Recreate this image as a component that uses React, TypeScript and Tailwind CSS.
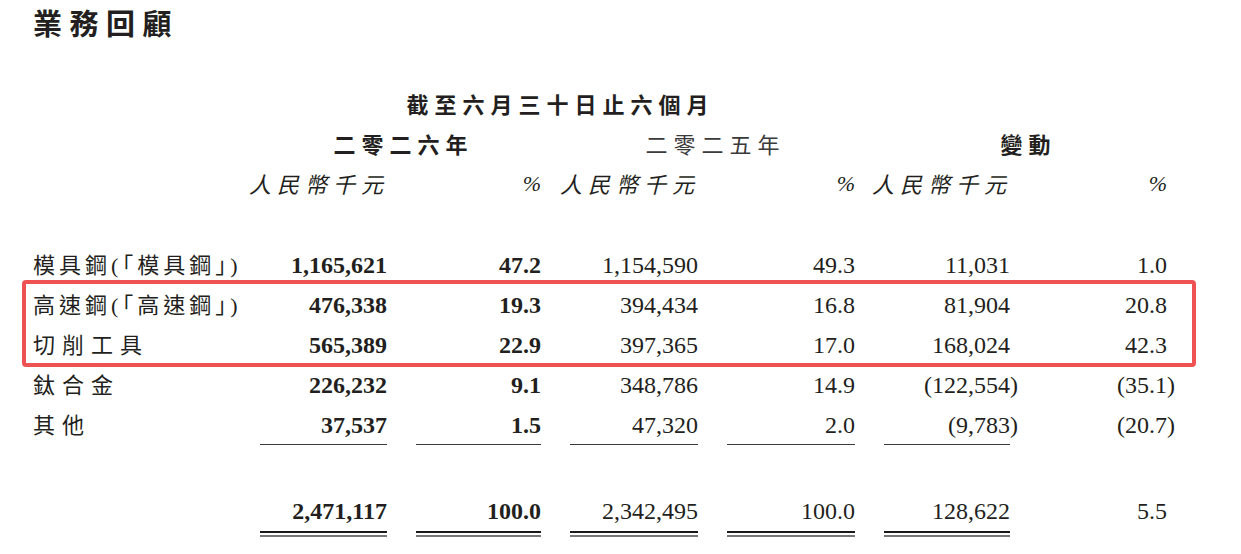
import React from "react";

type Row = {
  label: string;
  long?: boolean;
  values: string[];
};

const ROWS: Row[] = [
  { label: "模具鋼(「模具鋼」)", long: true, values: ["1,165,621", "47.2", "1,154,590", "49.3", "11,031", "1.0"] },
  { label: "高速鋼(「高速鋼」)", long: true, values: ["476,338", "19.3", "394,434", "16.8", "81,904", "20.8"] },
  { label: "切削工具", values: ["565,389", "22.9", "397,365", "17.0", "168,024", "42.3"] },
  { label: "鈦合金", values: ["226,232", "9.1", "348,786", "14.9", "(122,554)", "(35.1)"] },
  { label: "其他", values: ["37,537", "1.5", "47,320", "2.0", "(9,783)", "(20.7)"] },
];

const TOTAL = ["2,471,117", "100.0", "2,342,495", "100.0", "128,622", "5.5"];

const GRID = "grid grid-cols-[198px_156px_154px_157px_157px_155px_157px]";
const SERIF = "font-['Liberation_Serif','Noto_Sans_CJK_TC',serif]";
const CJK = "font-['Noto_Sans_CJK_TC','Noto_Sans_CJK_SC',sans-serif]";

// closing paren hangs past the digit column, like the printed report
function Num({ v }: { v: string }) {
  if (v.endsWith(")")) {
    return (
      <span>
        {v.slice(0, -1)}
        <span className="-mr-[8px]">)</span>
      </span>
    );
  }
  return <span>{v}</span>;
}

function DataRow({ row, underline }: { row: Row; underline?: boolean }) {
  return (
    <div className={`${GRID} h-[40px]`}>
      <div
        className={`flex items-center whitespace-nowrap text-[22px] ${SERIF} ${
          row.long ? "tracking-[4px]" : "tracking-[7px]"
        }`}
      >
        {row.label}
      </div>
      {row.values.map((v, i) => (
        <div key={i} className="pl-[29px]">
          <div
            className={`flex h-[40px] items-center justify-end text-[24px] ${SERIF} ${
              i < 2 ? "font-bold" : ""
            } ${underline && i < 5 ? "h-[39px] border-b border-[#3a3a3a]" : ""}`}
          >
            <Num v={v} />
          </div>
        </div>
      ))}
    </div>
  );
}

export default function App() {
  return (
    <div className="h-[554px] w-[1241px] overflow-hidden bg-white pl-[33px] text-[#231f20]">
      <div className={`h-[44px] leading-[44px] text-[29px] font-bold tracking-[7.5px] ${CJK}`}>
        業務回顧
      </div>

      <div className="mt-[39px]">
        <div className={`${GRID} h-[40px]`}>
          <div className="col-span-1" />
          <div className={`col-span-4 flex items-center justify-center pl-[29px] text-[22px] font-bold ${CJK}`}>
            <span className="-mr-[6px] whitespace-nowrap tracking-[6px]">截至六月三十日止六個月</span>
          </div>
        </div>

        <div className={`${GRID} h-[40px]`}>
          <div />
          <div className={`col-span-2 flex items-center justify-center pl-[29px] text-[22px] font-bold ${CJK}`}>
            <span className="-mr-[6px] whitespace-nowrap tracking-[6px]">二零二六年</span>
          </div>
          <div className={`col-span-2 flex items-center justify-center pl-[29px] text-[22px] ${CJK}`}>
            <span className="-mr-[6px] whitespace-nowrap tracking-[6px] text-[#3a3a3a]">二零二五年</span>
          </div>
          <div className={`col-span-2 flex items-center justify-center pl-[29px] text-[22px] font-bold ${CJK}`}>
            <span className="-mr-[6px] whitespace-nowrap tracking-[6px]">變動</span>
          </div>
        </div>

        <div className={`${GRID} h-[40px] italic`}>
          <div />
          {["人民幣千元", "%", "人民幣千元", "%", "人民幣千元", "%"].map((h, i) => (
            <div key={i} className="pl-[29px]">
              <div className="flex h-[40px] items-center justify-end whitespace-nowrap">
                {h === "%" ? (
                  <span className={`text-[22px] ${SERIF}`}>%</span>
                ) : (
                  <span className={`-mr-[2px] shrink-0 whitespace-nowrap text-[22px] tracking-[6px] ${CJK}`}>{h}</span>
                )}
              </div>
            </div>
          ))}
        </div>
      </div>

      <div className="mt-[42px]">
        <DataRow row={ROWS[0]} />
        <div className="relative">
          <DataRow row={ROWS[1]} />
          <DataRow row={ROWS[2]} />
          <div className="pointer-events-none absolute -bottom-[2px] -left-[11px] -top-[5px] right-[45px] rounded-[4px] border-[4px] border-[#ee5253]" />
        </div>
        <DataRow row={ROWS[3]} />
        <DataRow row={ROWS[4]} underline />
      </div>

      <div className={`${GRID} mt-[47px]`}>
        <div />
        {TOTAL.map((v, i) => (
          <div key={i} className="pl-[29px]">
            <div
              className={`flex h-[38px] items-center justify-end text-[24px] ${SERIF} ${
                i < 2 ? "font-bold" : ""
              }`}
            >
              {v}
            </div>
            {i < 5 && (
              <div>
                <div className="mt-[1px] h-[2px] bg-[#1a1a1a]" />
                <div className="mt-[2px] h-[2px] bg-[#777]" />
              </div>
            )}
          </div>
        ))}
      </div>
    </div>
  );
}
